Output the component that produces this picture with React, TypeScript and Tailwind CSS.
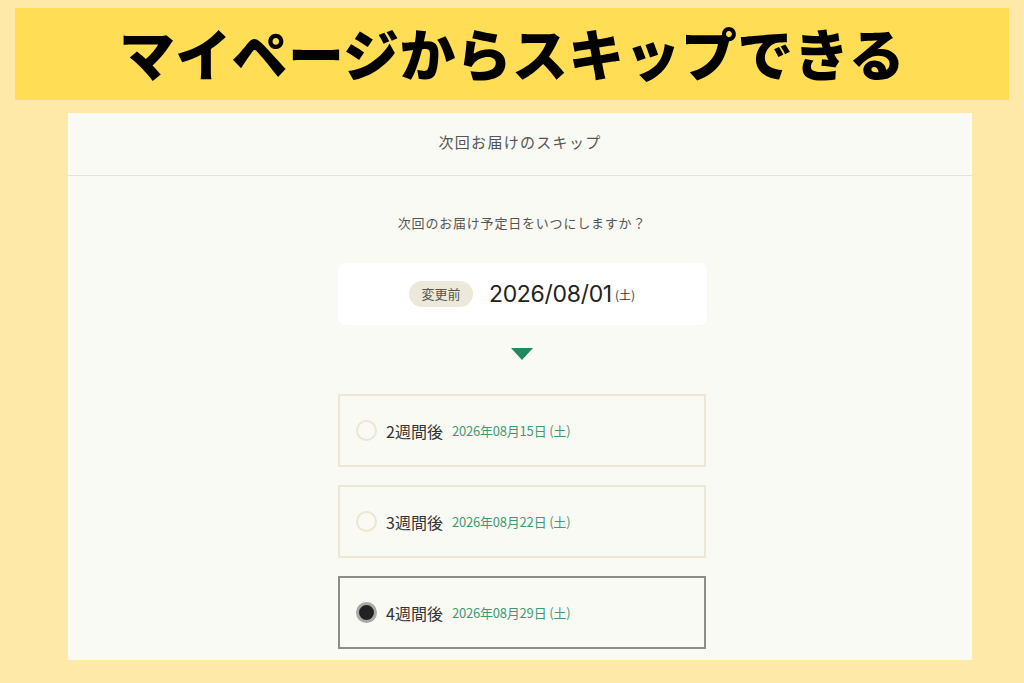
import React, { useState } from 'react';

const jp = { fontFamily: '"Noto Sans CJK JP", "Noto Sans", sans-serif' };

const options = [
  { weeks: 2, date: '2026年08月15日 (土)' },
  { weeks: 3, date: '2026年08月22日 (土)' },
  { weeks: 4, date: '2026年08月29日 (土)' },
];

const App = () => {
  const [selected, setSelected] = useState(4);

  return (
    <div className="w-[1024px] h-[683px] bg-[#ffe9a9] overflow-hidden flex flex-col items-center pt-2" style={jp}>
      {/* Title banner */}
      <div className="w-[994px] h-[92px] bg-[#ffdd55] flex items-center justify-center">
        <h1 className="text-[56px] font-black text-black leading-none tracking-[0.3px] -mt-1">
          マイページからスキップできる
        </h1>
      </div>

      {/* Skip panel */}
      <div className="mt-[13px] ml-[16px] w-[904px] h-[547px] bg-[#fafaf5] flex flex-col">
        <div className="h-[63px] flex items-center justify-center border-b border-[#e6e3d1] text-[15px] text-[#555] tracking-[1.3px] pb-1">
          次回お届けのスキップ
        </div>

        <div className="flex flex-col items-center pl-[4px]">
          <p className="mt-[40px] text-[13px] text-[#555] tracking-[0.8px] leading-none">
            次回のお届け予定日をいつにしますか？
          </p>

          {/* Current date */}
          <div className="mt-[34px] w-[369px] h-[62px] bg-white rounded-lg flex items-center justify-center">
            <span className="h-[26px] w-[64px] rounded-full bg-[#ece9db] text-[13px] text-[#555] flex items-center justify-center">
              変更前
            </span>
            <span
              className="ml-[16px] text-[23px] text-[#222] tracking-[-0.3px]"
              style={{ fontFamily: 'Inter, "Noto Sans CJK JP", sans-serif' }}
            >
              2026/08/01
            </span>
            <span className="ml-[3px] text-[12px] text-[#333] mt-[1px]">(土)</span>
          </div>

          <svg width="22" height="12" viewBox="0 0 22 12" className="mt-[23px]">
            <polygon points="0,0 22,0 11,12" fill="#1f8a5c" />
          </svg>

          {/* Skip options */}
          <div className="mt-[34px] flex flex-col gap-[18px]">
            {options.map((o) => {
              const on = selected === o.weeks;
              return (
                <button
                  key={o.weeks}
                  onClick={() => setSelected(o.weeks)}
                  className={
                    'w-[368px] h-[73px] flex items-center pl-[16px] text-left ' +
                    (on ? 'border-2 border-[#8c8c8a]' : 'border-2 border-[#ede8d5]')
                  }
                >
                  {on ? (
                    <span className="w-[21px] h-[21px] rounded-full border-[3px] border-[#a8a8a4] bg-[#222] shrink-0" />
                  ) : (
                    <span className="w-[21px] h-[21px] rounded-full border-2 border-[#ece6d2] bg-[#fafaf5] shrink-0" />
                  )}
                  <span className="ml-[9px] text-[16px] text-[#333]">{o.weeks}週間後</span>
                  <span className="ml-[9px] text-[13px] text-[#3d9a72] tracking-[-0.2px] mt-[1px]">{o.date}</span>
                </button>
              );
            })}
          </div>
        </div>
      </div>
    </div>
  );
};

export default App;
